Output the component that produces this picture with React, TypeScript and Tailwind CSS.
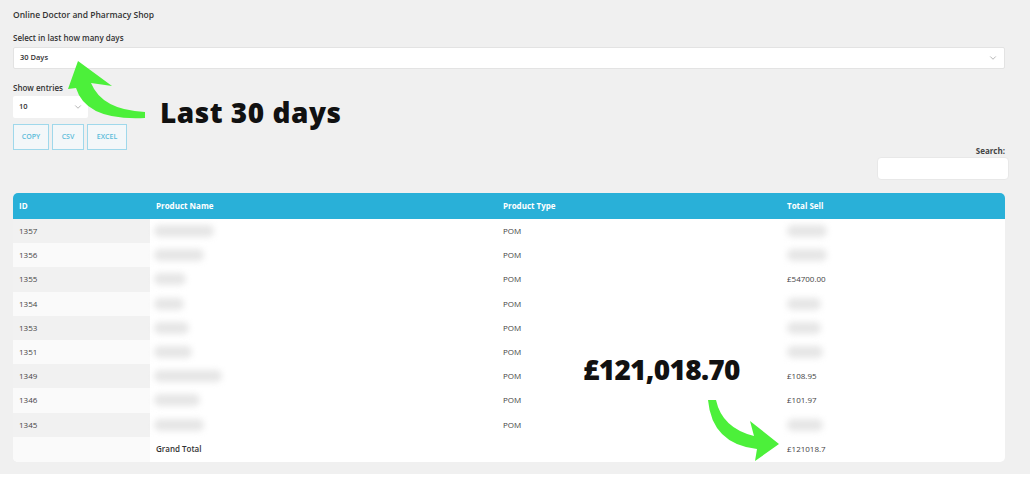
import { ChevronDown } from 'lucide-react'

type Row = {
  id: string
  name: string
  type: string
  sell: string | null
  sellBlur: string
}

// blurred cells keep their widths as full class strings so tailwind picks them up
const rows: Row[] = [
  { id: '1357', name: 'w-[60px] bg-[#dde8f1]', type: 'POM', sell: null, sellBlur: 'w-[40px] bg-[#e0eaf3]' },
  { id: '1356', name: 'w-[50px]', type: 'POM', sell: null, sellBlur: 'w-[40px]' },
  { id: '1355', name: 'w-[32px]', type: 'POM', sell: '£54700.00', sellBlur: '' },
  { id: '1354', name: 'w-[30px]', type: 'POM', sell: null, sellBlur: 'w-[34px]' },
  { id: '1353', name: 'w-[35px]', type: 'POM', sell: null, sellBlur: 'w-[34px]' },
  { id: '1351', name: 'w-[38px]', type: 'POM', sell: null, sellBlur: 'w-[36px]' },
  { id: '1349', name: 'w-[68px]', type: 'POM', sell: '£108.95', sellBlur: '' },
  { id: '1346', name: 'w-[46px]', type: 'POM', sell: '£101.97', sellBlur: '' },
  { id: '1345', name: 'w-[50px]', type: 'POM', sell: null, sellBlur: 'w-[36px]' },
]

const font = { fontFamily: '"Open Sans", "Noto Sans", sans-serif' }
const bigFont = { fontFamily: '"Open Sans", "DejaVu Sans", sans-serif' }

function Blur({ cls }: { cls: string }) {
  return <div className={`h-[12px] rounded-full bg-[#e6e6e6] blur-[3px] ${cls}`} />
}

function Arrows() {
  return (
    <svg className="absolute left-0 top-0 pointer-events-none" width="1030" height="481" viewBox="0 0 1030 481">
      <path
        d="M78 61 L112 86 L91 83 Q102 110 145 112 L145 118 Q86 121 76 88 L68 89 Z"
        fill="#4cf03a"
      />
      <path
        d="M708 400 L716 400 Q722 428 754 436 L750 421 L779 444 L755 461 L757 449 Q712 444 708 400 Z"
        fill="#4cf03a"
      />
    </svg>
  )
}

export default function App() {
  return (
    <div className="relative w-[1030px] h-[474px] bg-[#f0f0f0] text-[#444]" style={font}>
      <div className="pl-[13px] pr-[25px] pt-[9px]">
        <div className="text-[8.5px] leading-[12px] font-semibold text-[#333]">
          Online Doctor and Pharmacy Shop
        </div>

        <div className="mt-[11px] text-[8px] leading-[12px] font-semibold text-[#333]">
          Select in last how many days
        </div>
        <div className="mt-[3px] h-[22px] bg-white border border-[#e3e3e3] rounded-[2px] flex items-center justify-between pl-[6px] pr-[6px]">
          <span className="text-[7.5px] font-semibold text-[#333]">30 Days</span>
          <ChevronDown size={10} strokeWidth={1.5} color="#888" />
        </div>

        <div className="flex justify-between items-start">
          <div>
            <div className="mt-[13px] text-[8px] leading-[12px] font-semibold text-[#333]">Show entries</div>
            <div className="mt-[2px] w-[75px] h-[22px] bg-white rounded-[2px] flex items-center justify-between pl-[6px] pr-[5px]">
              <span className="text-[7.5px] font-semibold text-[#333]">10</span>
              <ChevronDown size={10} strokeWidth={1.5} color="#888" />
            </div>
            <div className="mt-[6px] flex gap-[3px]">
              <button className="w-[36px] h-[26px] border border-[#9fd8eb] text-[#5bbcd9] text-[7px] font-semibold bg-[#f3f7f9]">COPY</button>
              <button className="w-[32px] h-[26px] border border-[#9fd8eb] text-[#5bbcd9] text-[7px] font-semibold bg-[#f3f7f9]">CSV</button>
              <button className="w-[40px] h-[26px] border border-[#9fd8eb] text-[#5bbcd9] text-[7px] font-semibold bg-[#f3f7f9]">EXCEL</button>
            </div>
          </div>
          <div className="pt-[76px] flex flex-col items-end -mr-[4px]">
            <div className="pr-[4px] text-[8px] leading-[12px] font-bold text-[#444]">Search:</div>
            <div className="w-[132px] h-[23px] bg-white rounded-[4px] border border-[#e8e8e8]" />
          </div>
        </div>

        <div className="mt-[13px] w-[992px] rounded-[5px] overflow-hidden bg-white">
          <table className="w-full border-collapse table-fixed">
            <colgroup>
              <col className="w-[137px]" />
              <col className="w-[347px]" />
              <col className="w-[284px]" />
              <col className="w-[224px]" />
            </colgroup>
            <thead>
              <tr className="h-[26px] bg-[#29b0d8] text-white text-[8px] font-bold text-left">
                <th className="pl-[6px]">ID</th>
                <th className="pl-[6px]">Product Name</th>
                <th className="pl-[6px]">Product Type</th>
                <th className="pl-[6px]">Total Sell</th>
              </tr>
            </thead>
            <tbody className="text-[8px] text-[#444]">
              {rows.map((r, i) => (
                <tr key={r.id} className="h-[24.2px]">
                  <td className={`pl-[6px] ${i % 2 === 0 ? 'bg-[#f1f1f1]' : 'bg-[#fafafa]'}`}>{r.id}</td>
                  <td className="pl-[4px]">
                    <Blur cls={r.name} />
                  </td>
                  <td className="pl-[6px]">{r.type}</td>
                  <td className="pl-[6px]">{r.sell ? r.sell : <Blur cls={r.sellBlur} />}</td>
                </tr>
              ))}
              <tr className="h-[25px]">
                <td className="bg-[#fafafa]" />
                <td className="pl-[6px] font-semibold text-[#333]">Grand Total</td>
                <td />
                <td className="pl-[6px]">£121018.7</td>
              </tr>
            </tbody>
          </table>
        </div>
      </div>

      <Arrows />

      <div className="absolute left-[160px] top-[98px] text-[28px] leading-none font-extrabold text-[#111] tracking-[0.5px]" style={bigFont}>
        Last 30 days
      </div>
      <div className="absolute left-[583px] top-[355px] text-[28px] leading-none font-extrabold text-[#111] tracking-[-0.7px]" style={bigFont}>
        £121,018.70
      </div>
    </div>
  )
}
